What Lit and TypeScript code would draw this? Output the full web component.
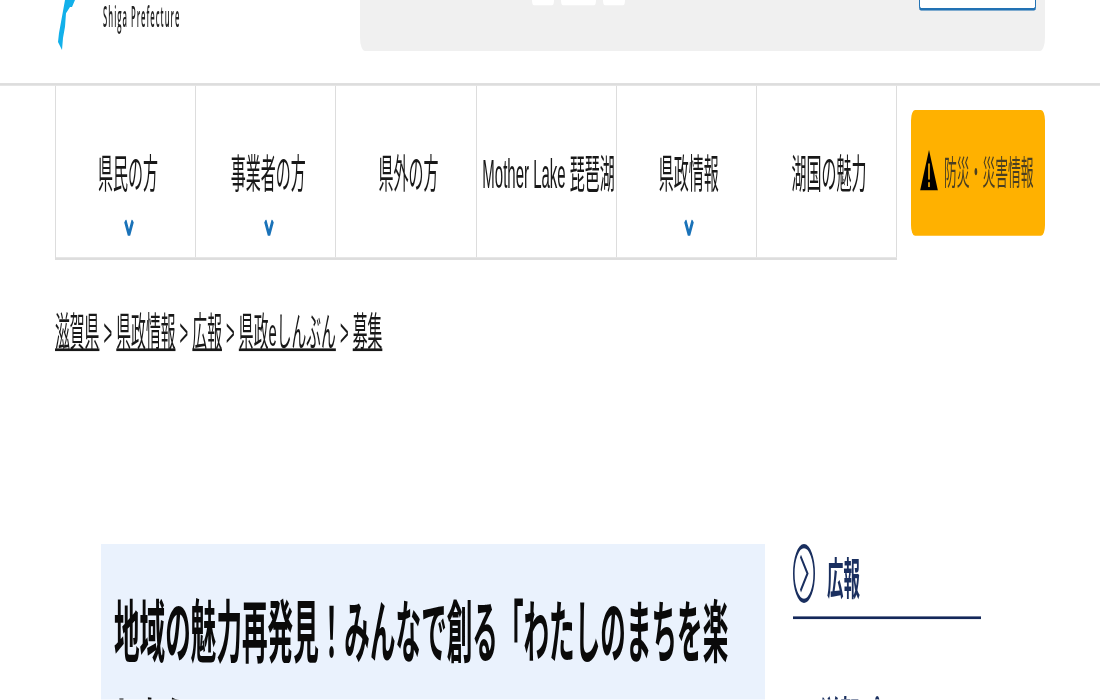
import { LitElement, html, css, svg } from "lit";
import { customElement } from "lit/decorators.js";

const NAV = [
  { t: "県民の方", c: true },
  { t: "事業者の方", c: true },
  { t: "県外の方", c: false },
  { t: "Mother Lake 琵琶湖", c: false },
  { t: "県政情報", c: true },
  { t: "湖国の魅力", c: false },
];

@customElement("app-root")
export class AppRoot extends LitElement {
  static styles = css`
    :host {
      display: block;
      width: 1100px;
      height: 700px;
      overflow: hidden;
      background: #fff;
      font-family: "Liberation Sans", "Noto Sans CJK JP", sans-serif;
      color: #222;
    }
    .page {
      width: 1100px;
      height: 261.2px;
      transform: scaleY(2.68);
      transform-origin: 0 0;
      display: flex;
      flex-direction: column;
      overflow: hidden;
      filter: blur(0.25px);
    }
    .header {
      height: 30.8px;
      flex: none;
      border-bottom: 1px solid #ddd;
      padding: 0 55px;
      display: flex;
      box-sizing: content-box;
    }
    .logo {
      width: 305px;
      display: flex;
      flex: none;
      align-items: flex-start;
    }
    .lake {
      width: 22px;
      height: 19px;
      display: block;
      flex: none;
    }
    .en {
      margin-left: 26px;
      font-size: 10.5px;
      font-family: "Open Sans", sans-serif;
      font-weight: 600;
      letter-spacing: 1.4px;
      color: #222;
      line-height: 12px;
      transform: scaleX(0.73);
      transform-origin: 0 0;
      white-space: nowrap;
    }
    .search {
      flex: 1;
      height: 18.65px;
      background: #f0f0f0;
      border-radius: 0 0 5px 5px;
      display: flex;
      padding-left: 172px;
      padding-right: 9px;
      justify-content: space-between;
    }
    .pills {
      display: flex;
      gap: 7px;
    }
    .pills span {
      width: 22px;
      height: 1.9px;
      background: #fff;
      border-radius: 0 0 3px 3px;
    }
    .pills span:nth-child(2) {
      width: 35px;
    }
    .btn {
      width: 117px;
      height: 3.7px;
      background: #fff;
      border: 1px solid #2272b4;
      border-top: none;
      border-radius: 0 0 2px 2px;
      box-sizing: border-box;
    }
    .navrow {
      flex: none;
      display: flex;
      padding: 0 55px;
      gap: 14px;
    }
    .nav {
      display: flex;
      width: 842px;
      height: 65.2px;
      border-left: 1px solid #ddd;
      border-bottom: 1px solid #ddd;
      box-sizing: border-box;
    }
    .nav a {
      flex: 1 1 0;
      min-width: 0;
      border-right: 1px solid #ddd;
      position: relative;
      display: flex;
      align-items: center;
      justify-content: center;
      font-size: 15px;
      white-space: nowrap;
      color: #181818;
      padding: 0 0 1.6px 5px;
    }
    .chev {
      position: absolute;
      left: 50%;
      margin-left: -2px;
      top: 50.2px;
      width: 10px;
      height: 6.3px;
    }
    .alert {
      margin-top: 9.2px;
      width: 134px;
      height: 46.6px;
      background: #ffb100;
      border-radius: 4px;
      display: flex;
      align-items: center;
      padding: 0 0 2.4px 9px;
      gap: 6px;
      box-sizing: border-box;
      font-size: 12.8px;
      color: #4a3f22;
      white-space: nowrap;
    }
    .alert svg {
      width: 18px;
      height: 15.3px;
      flex: none;
      margin-top: 1px;
    }
    .crumbs {
      flex: none;
      padding: 0 55px;
      margin-top: 17.9px;
      font-size: 14.8px;
      line-height: 18px;
      color: #181818;
      white-space: nowrap;
    }
    .crumbs a {
      color: #181818;
      text-decoration: underline;
      text-decoration-thickness: 1px;
    }
    .main {
      flex: none;
      margin-top: 70.4px;
      padding-left: 101px;
      display: flex;
      gap: 28px;
    }
    .article {
      width: 664px;
      height: 60px;
      background: #eaf2fd;
      padding: 14.6px 13px 0;
      box-sizing: border-box;
    }
    h1 {
      margin: 0;
      font-size: 25.6px;
      font-weight: 700;
      line-height: 36px;
      color: #0a0a0a;
    }
    .side {
      width: 188px;
      margin-top: -0.75px;
    }
    .side h2 {
      margin: 0;
      height: 27.2px;
      border-bottom: 1px solid #14285a;
      display: flex;
      align-items: flex-start;
      gap: 12px;
      font-size: 16.5px;
      font-weight: 700;
      color: #1a2f5f;
      line-height: 27px;
      box-sizing: content-box;
    }
    .side h2 svg {
      width: 22px;
      height: 22px;
      flex: none;
    }
    .side p {
      margin: 27px 0 0;
      padding-left: 27px;
      font-size: 20px;
      line-height: 24px;
      color: #1a2f5f;
      font-weight: 700;
      white-space: nowrap;
    }
  `;

  render() {
    return html`
      <div class="page">
        <div class="header">
          <div class="logo">
            <svg class="lake" viewBox="0 0 22 19">
              <path
                fill="#12b0ea"
                d="M10 0 L20 0 L17 2.6 L15 2.6 L11 4.9 L10 10 L8 14.2 L7 18.7 L3 15.7 L4 12.3 L8 4.1 Z"
              />
            </svg>
            <div class="en">Shiga Prefecture</div>
          </div>
          <div class="search">
            <div class="pills"><span></span><span></span><span></span></div>
            <div class="btn"></div>
          </div>
        </div>
        <div class="navrow">
          <div class="nav">
            ${NAV.map(
              (n) => html`<a
                >${n.t}${n.c
                  ? svg`<svg class="chev" viewBox="0 0 10 6.3"><path d="M1.2 .3 L5 5.6 L8.8 .3" fill="none" stroke="#1a72b8" stroke-width="2.4"/></svg>`
                  : ""}</a
              >`
            )}
          </div>
          <div class="alert">
            <svg viewBox="0 0 18 15.3">
              <path d="M9 0 L18 15.3 L0 15.3 Z" fill="#000" />
              <rect x="8.2" y="5" width="1.6" height="6" fill="#ffb100" />
              <rect x="8.2" y="12" width="1.6" height="1.8" fill="#ffb100" />
            </svg>
            <span>防災・災害情報</span>
          </div>
        </div>
        <div class="crumbs">
          <a>滋賀県</a> &gt; <a>県政情報</a> &gt; <a>広報</a> &gt;
          <a>県政eしんぶん</a> &gt; <a>募集</a>
        </div>
        <div class="main">
          <div class="article">
            <h1>地域の魅力再発見！みんなで創る「わたしのまちを楽しもう」</h1>
          </div>
          <div class="side">
            <h2>
              <svg viewBox="0 0 22 22">
                <circle cx="11" cy="11" r="10.2" fill="none" stroke="#1a2f5f" stroke-width="1.6" />
                <path d="M7.5 4.5 L14.5 11 L7.5 17.5" fill="none" stroke="#1a2f5f" stroke-width="1.5" />
              </svg>
              広報
            </h2>
            <p>滋賀プラスワン</p>
          </div>
        </div>
      </div>
    `;
  }
}
